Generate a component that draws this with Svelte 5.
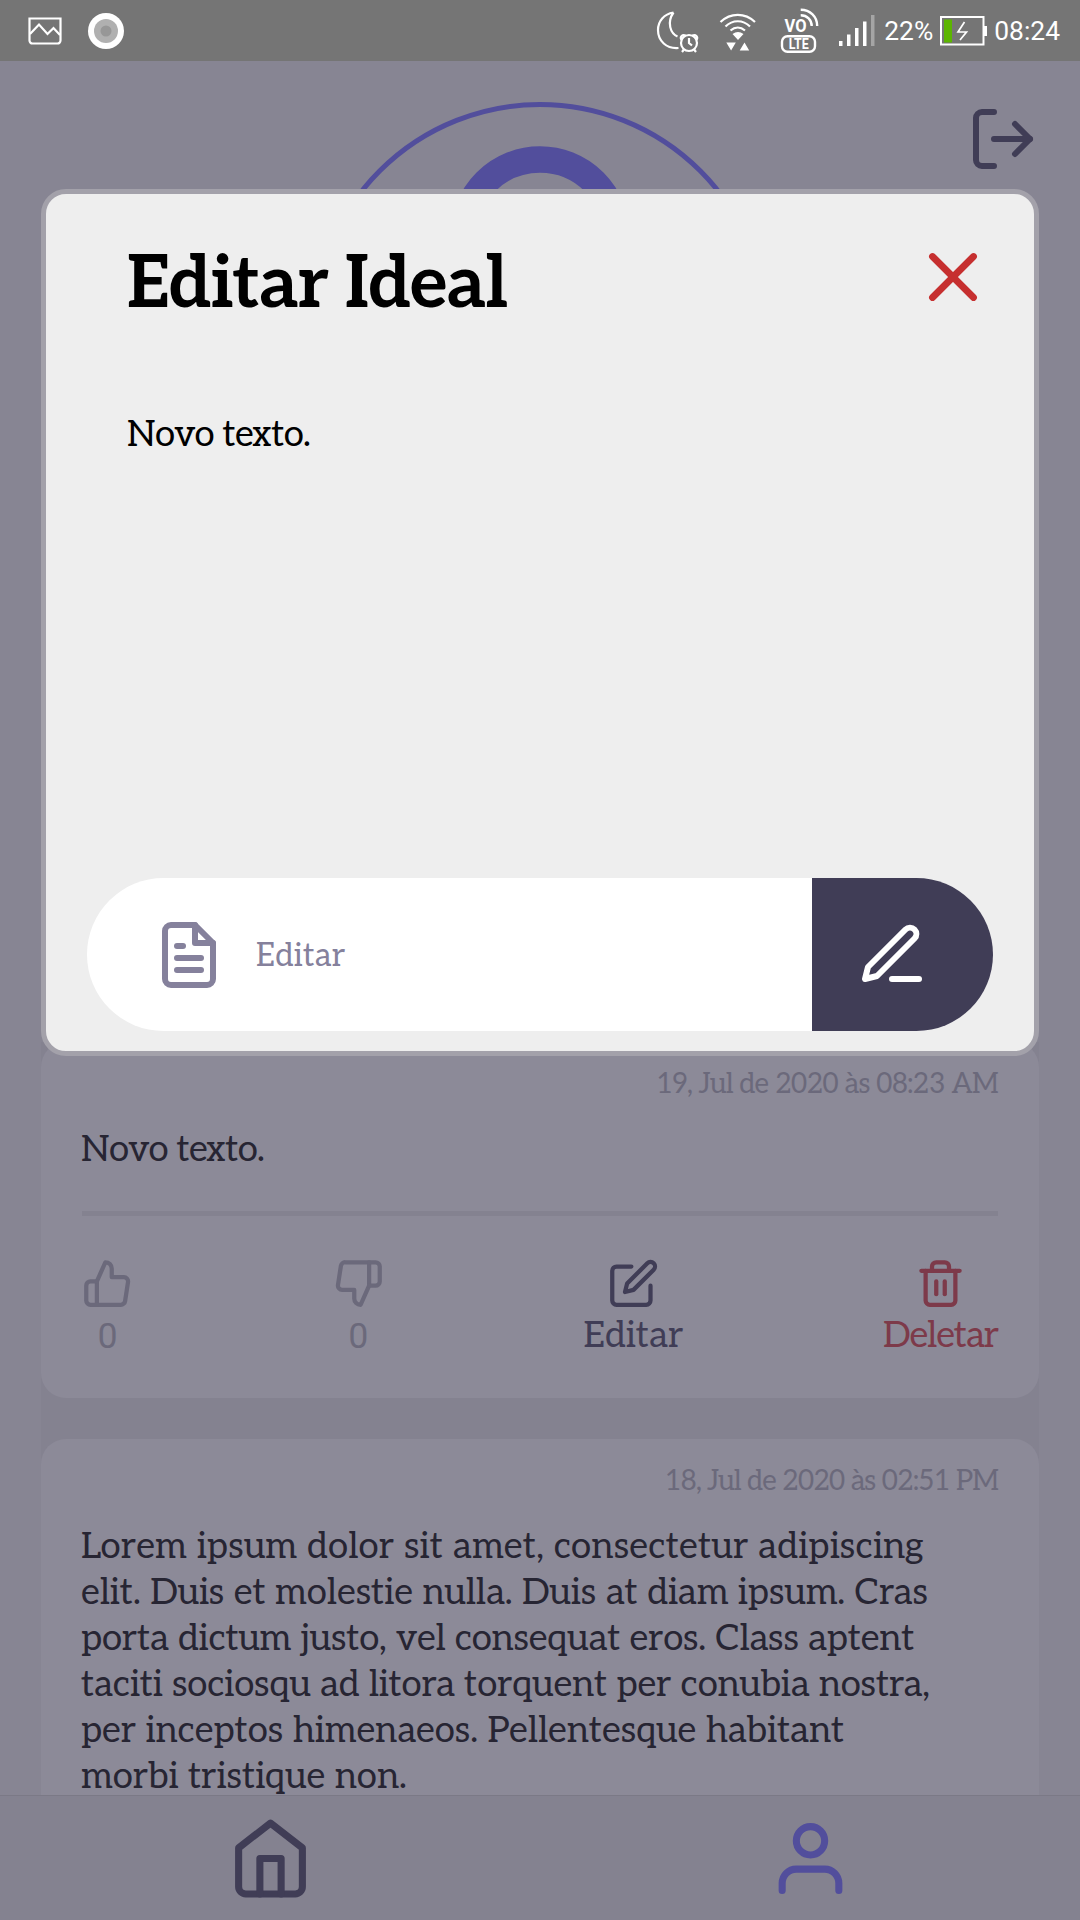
<script>
  // `tracking` is the letter-spacing, in px, that sets each line to its measure.
  const posts = [
    {
      date: { text: '19, Jul de 2020 às 08:23 AM', tracking: -0.7 },
      lines: [{ text: 'Novo texto.', tracking: -0.75 }],
      actions: [
        { icon: 'up', label: '0', tone: 'muted' },
        { icon: 'down', label: '0', tone: 'muted' },
        { icon: 'edit', label: 'Editar', tone: 'ink' },
        { icon: 'trash', label: 'Deletar', tone: 'danger' }
      ]
    },
    {
      date: { text: '18, Jul de 2020 às 02:51 PM', tracking: -0.9 },
      lines: [
        { text: 'Lorem ipsum dolor sit amet, consectetur adipiscing', tracking: 0.19 },
        { text: 'elit. Duis et molestie nulla. Duis at diam ipsum. Cras', tracking: -0.03 },
        { text: 'porta dictum justo, vel consequat eros. Class aptent', tracking: -0.19 },
        { text: 'taciti sociosqu ad litora torquent per conubia nostra,', tracking: -0.14 },
        { text: 'per inceptos himenaeos. Pellentesque habitant', tracking: -0.03 },
        { text: 'morbi tristique non.', tracking: 0 }
      ],
      actions: []
    }
  ];

  const icons = {
    up: ['M14 9V5a3 3 0 0 0-3-3l-4 9v11h11.28a2 2 0 0 0 2-1.7l1.38-9a2 2 0 0 0-2-2.3z', 'M7 22H4a2 2 0 0 1-2-2v-7a2 2 0 0 1 2-2h3'],
    down: ['M10 15v4a3 3 0 0 0 3 3l4-9V2H5.72a2 2 0 0 0-2 1.7l-1.38 9a2 2 0 0 0 2 2.3z', 'M17 2h3a2 2 0 0 1 2 2v7a2 2 0 0 1-2 2h-3'],
    edit: ['M11 4H4a2 2 0 0 0-2 2v14a2 2 0 0 0 2 2h14a2 2 0 0 0 2-2v-7', 'M18.5 2.5a2.12 2.12 0 0 1 3 3L12 15l-4 1 1-4z'],
    trash: ['M3 6h18', 'M19 6v14a2 2 0 0 1-2 2H7a2 2 0 0 1-2-2V6m3 0V4a2 2 0 0 1 2-2h4a2 2 0 0 1 2 2v2', 'M10 11v6', 'M14 11v6'],
    logout: ['M9 21H5a2 2 0 0 1-2-2V5a2 2 0 0 1 2-2h4', 'M16 17l5-5-5-5', 'M21 12H9'],
    close: ['M18 6L6 18', 'M6 6l12 12'],
    file: ['M14 2H6a2 2 0 0 0-2 2v16a2 2 0 0 0 2 2h12a2 2 0 0 0 2-2V8z', 'M14 2v6h6', 'M16 13H8', 'M16 17H8', 'M10 9H8'],
    pen: ['M12 20h9', 'M16.5 3.5a2.12 2.12 0 0 1 3 3L7 19l-4 1 1-4z'],
    home: ['M3 9l9-7 9 7v11a2 2 0 0 1-2 2H5a2 2 0 0 1-2-2z', 'M9 22V12h6v10'],
    user: ['M20 21v-2a4 4 0 0 0-4-4H8a4 4 0 0 0-4 4v2', 'M8 7a4 4 0 1 0 8 0a4 4 0 1 0-8 0']
  };
</script>

{#snippet icon(name, size)}
  <svg class="icon" width={size} height={size} viewBox="0 0 24 24">
    {#each icons[name] as d}<path {d} />{/each}
  </svg>
{/snippet}

<div class="screen">
  <header class="status">
    <div class="side">
      <svg width="34" height="28" viewBox="0 0 34 28" class="thin">
        <path d="M1.5 1.5h31v22a3 3 0 0 1-3 3h-25a3 3 0 0 1-3-3z" />
        <path d="M2 17l9-9.5 8.500 9.500 6-6 6.500 7" />
      </svg>
      <svg width="36" height="36" viewBox="0 0 36 36">
        <circle cx="18" cy="18" r="18" fill="#fff" />
        <circle cx="18" cy="18" r="12" fill="#b0b0b0" />
        <circle cx="18" cy="18" r="5.5" fill="#979797" />
      </svg>
    </div>
    <div class="side right">
      <svg class="thin moon" width="44" height="44" viewBox="0 0 44 44">
        <path d="M17.500 3.500C8 5 2 12 2 21c0 11 8.500 19 20.500 18M17.500 3.500c-7 10-3 21 4 24" />
        <circle cx="33" cy="34" r="8" />
        <path d="M33 29v5l3 2.500M25.500 31c-2-3 1-6 4-4.500M40.500 31c2-3-1-6-4-4.500M28 40.500L26 43M38 40.500l2 2.500" />
      </svg>
      <svg class="thin wifi" width="38" height="40" viewBox="0 0 38 40">
        <path d="M1.500 11c10-9.500 24.500-9.500 34.500 0M6.500 15.500c7-7 17.500-7 24.500 0M11.500 19.500c4.500-4 10-4 14.500 0" />
        <path class="solid" d="M13.500 23q5.500-4 11 0l-5.500 6zM7.300 31.500h9.500l-4.700 8zM20.700 39.500h9.500l-4.700-8z" />
      </svg>
      <svg class="volte" width="42" height="46" viewBox="0 0 42 46">
        <text x="5.500" y="24" textLength="22" lengthAdjust="spacingAndGlyphs">VO</text>
        <rect x="3" y="28.300" width="33" height="15.500" rx="5.500" />
        <text class="lte" x="9.700" y="41" textLength="20" lengthAdjust="spacingAndGlyphs">LTE</text>
        <path d="M21.700 1.800c9.500 0 16.500 7 16.500 16.200M21.700 7.300c6.500 0 11 4.500 11 10.700" />
      </svg>
      <svg class="signal" width="36" height="32" viewBox="0 0 36 32" fill="#fff">
        <path d="M0 26h3.500v5H0zM8 19.500h3.500V31H8zM16 13h3.500v18H16zM24 6.500h3.500V31H24z" />
        <path opacity=".35" d="M32 0h3.500v31H32z" />
      </svg>
      <span>22%</span>
      <svg class="battery" width="47" height="30" viewBox="0 0 47 30">
        <rect x="1" y="1" width="42.500" height="27.500" fill="none" stroke="#fff" stroke-width="2" />
        <path d="M44 10h3v10h-3z" fill="#fff" />
        <path d="M4 3.500h8v23H4z" fill="#5cb500" />
        <path d="M24.500 6l-6.500 10h8.500l-6.500 8" fill="none" stroke="#fff" stroke-width="1.700" />
      </svg>
      <span>08:24</span>
    </div>
  </header>

  <main>
    <section class="profile">
      <div class="avatar">
        <svg width="180" height="180" viewBox="0 0 180 180"><circle cx="90" cy="90" r="76.500" /></svg>
      </div>
      <button class="logout" aria-label="Sair">{@render icon('logout', 72)}</button>
    </section>

    <section class="feed">
      {#each posts as post}
        <article class="card">
          <time style:letter-spacing="{post.date.tracking}px">{post.date.text}</time>
          <p class="copy">
            {#each post.lines as line}<span style:letter-spacing="{line.tracking}px">{line.text}</span>{/each}
          </p>
          {#if post.actions.length}
            <div class="actions">
              {#each post.actions as action}
                <button class={action.tone}>
                  {@render icon(action.icon, 51)}
                  <span>{action.label}</span>
                </button>
              {/each}
            </div>
          {/if}
        </article>
      {/each}
    </section>
  </main>

  <nav>
    <button class="ink" aria-label="Início">{@render icon('home', 85)}</button>
    <button class="active" aria-label="Perfil">{@render icon('user', 85)}</button>
  </nav>

  <div class="modal">
    <div class="title-row">
      <h1>Editar Ideal</h1>
      <button class="close" aria-label="Fechar">{@render icon('close', 82)}</button>
    </div>
    <p class="draft">Novo texto.</p>
    <div class="field">
      <label>{@render icon('file', 72)}<span>Editar</span></label>
      <button class="submit" aria-label="Salvar">{@render icon('pen', 72)}</button>
    </div>
  </div>
</div>

<style>
  :global(body) { margin: 0; background: #878593; }
  * { box-sizing: border-box; }
  button { border: 0; padding: 0; background: none; font: inherit; color: inherit; display: block; }
  p, h1 { margin: 0; }
  svg { display: block; flex: none; }

  .screen {
    position: relative;
    width: 1080px;
    height: 1920px;
    display: flex;
    flex-direction: column;
    overflow: hidden;
    background: #878593;
    font-family: "Roboto Slab", Aleo, "DejaVu Serif Condensed", serif;
    font-size: 36.4px;
    line-height: 46px;
    white-space: nowrap;
    font-variant-numeric: proportional-nums;
  }
  .icon { fill: none; stroke: currentColor; stroke-width: 2; stroke-linecap: round; stroke-linejoin: round; }

  .status {
    flex: none;
    height: 61px;
    padding: 0 20px 0 28px;
    display: flex;
    justify-content: space-between;
    align-items: center;
    background: #757575;
    color: #fff;
    font: 26.400px/61px Roboto, sans-serif;
  }
  .side { display: flex; align-items: center; gap: 26px; }
  .right { gap: 0; }
  .right span { padding-top: 1px; }
  .thin { fill: none; stroke: #fff; stroke-width: 2.200; }
  .thin .solid { fill: #fff; stroke: none; }
  .moon { margin-right: 19px; }
  .wifi { margin-right: 22px; }
  .volte { margin-right: 18px; fill: #fff; font: 700 17.500px Roboto, sans-serif; }
  .volte .lte { font-size: 14px; }
  .volte rect, .volte path { fill: none; stroke: #fff; stroke-width: 2.400; }
  .signal { margin-right: 9px; }
  .battery { margin: 0 7px 0 7px; }

  main { flex: 1; min-height: 0; overflow: hidden; }
  .profile { position: relative; height: 981px; padding-top: 41px; display: flex; justify-content: center; }
  .avatar {
    width: 458px;
    height: 458px;
    padding-top: 39px;
    border: 5px solid #524e9c;
    border-radius: 50%;
    display: flex;
    justify-content: center;
  }
  .avatar circle { fill: none; stroke: #524e9c; stroke-width: 26.500; }
  .logout { position: absolute; top: 42px; right: 41px; color: #403d56; }

  .feed { margin: 0 41px; background: #848290; display: flex; flex-direction: column; gap: 41px; }
  .card { padding: 23px 41px 39px; border-radius: 25px; background: #8c8a98; }
  time {
    display: block;
    text-align: right;
    font-size: 28px;
    line-height: 40px;
    color: #6b697b;
  }
  .copy { margin: 22px 0 0 -1px; color: #272533; }
  .copy span { display: block; }
  .actions {
    margin-top: 38px;
    padding-top: 42px;
    border-top: 5px solid #848290;
    display: flex;
    justify-content: space-between;
  }
  .actions button { display: flex; flex-direction: column; align-items: center; gap: 4px; }
  .muted { color: #6b697b; }
  .muted span { font-family: Roboto, sans-serif; font-size: 35.500px; }
  .ink { color: #403d56; }
  .danger { color: #7d3a4a; }
  .danger span { letter-spacing: -1.100px; }

  nav {
    flex: none;
    height: 125px;
    display: grid;
    grid-template-columns: 1fr 1fr;
    place-items: center;
    border-top: 1px solid #7b7986;
    background: #848290;
  }
  .active { color: #524e9c; }

  .modal {
    position: absolute;
    left: 41px;
    top: 189px;
    width: 998px;
    height: 867px;
    display: flex;
    flex-direction: column;
    border: 5px solid #a3a1aa;
    border-radius: 25px;
    background: #eee;
    color: #000;
  }
  .title-row { display: flex; justify-content: space-between; padding: 42px 40px 0 81px; }
  h1 { padding-top: 3px; font-size: 72px; line-height: 92px; font-weight: 700; letter-spacing: -1.050px; }
  .close { height: 82px; color: #c62f2f; }
  .draft { flex: 1; padding: 81px 81px 0; letter-spacing: -0.750px; }
  .field {
    height: 153px;
    margin: 0 41px 20px;
    display: flex;
    overflow: hidden;
    border-radius: 77px;
    background: #fff;
  }
  label {
    flex: 1;
    display: flex;
    align-items: center;
    gap: 31px;
    padding-left: 66px;
    color: #85819c;
    font-size: 32px;
    letter-spacing: 0.300px;
  }
  label span { padding-top: 2px; }
  .submit { width: 181px; padding-left: 44px; background: #403d56; color: #fff; }
</style>
